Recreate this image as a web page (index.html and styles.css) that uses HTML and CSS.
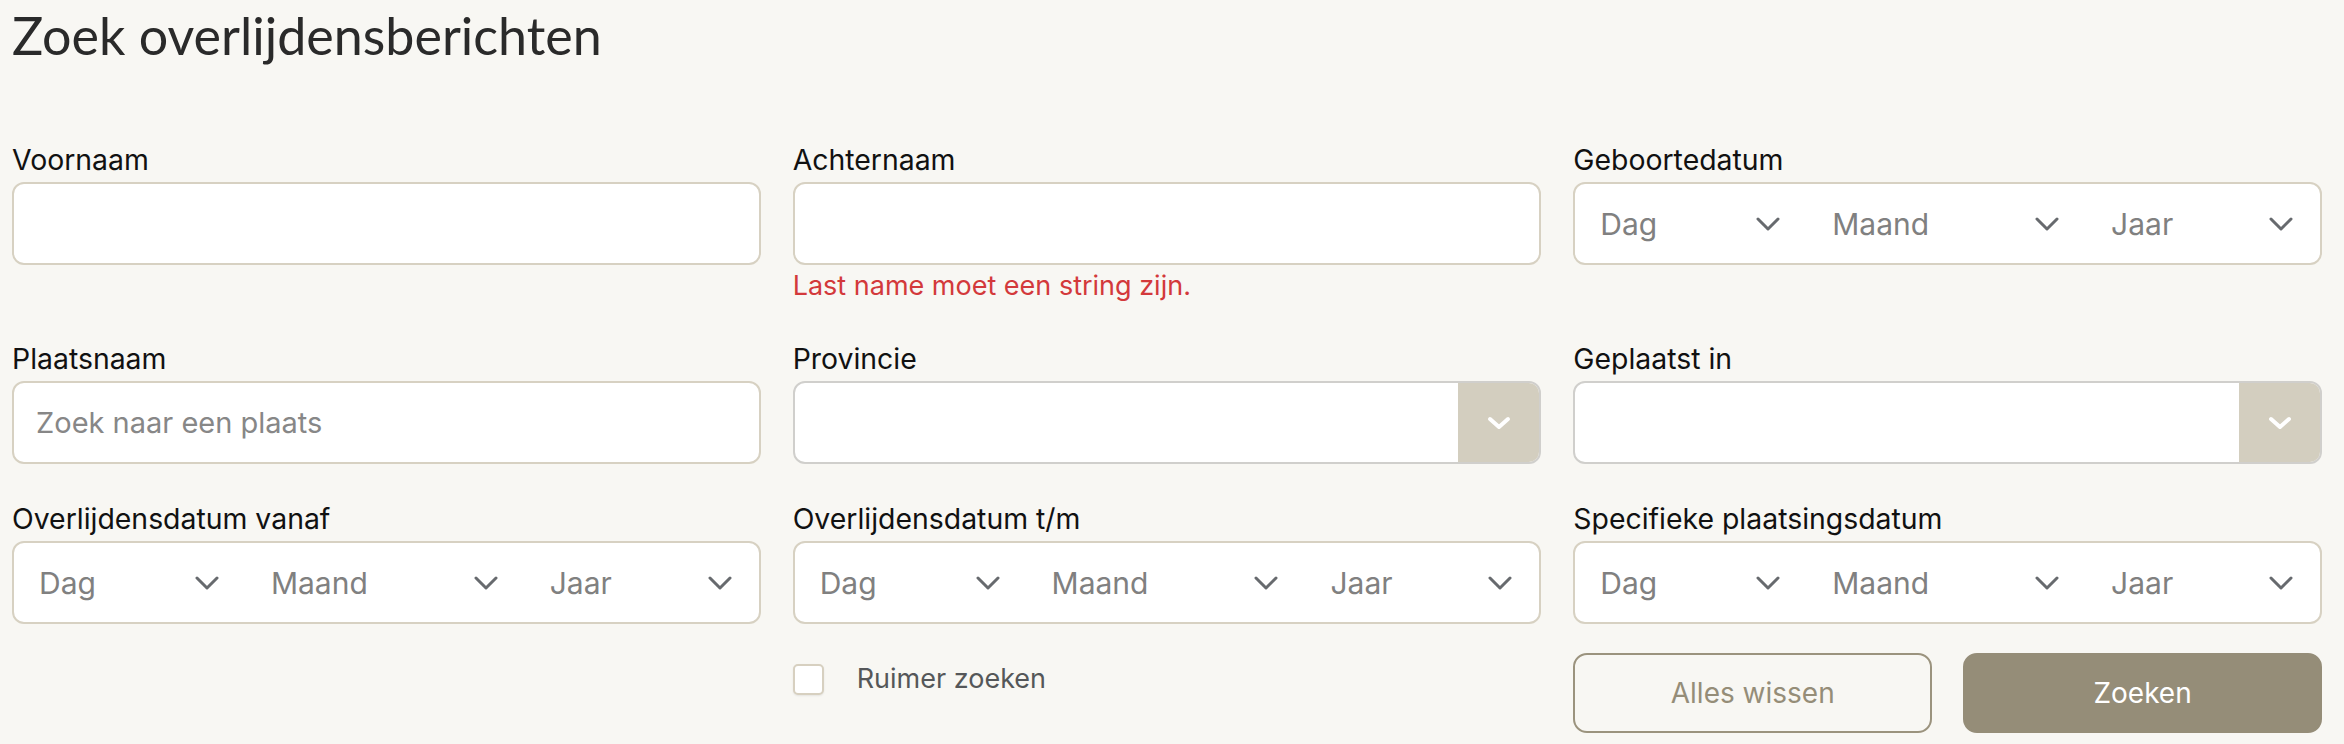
FILE: index.html
```html
<!DOCTYPE html>
<html lang="nl">
<head>
<meta charset="utf-8">
<title>Zoek overlijdensberichten</title>
<link rel="stylesheet" href="styles.css">
</head>
<body>
<main class="page">
  <h1 class="title">Zoek overlijdensberichten</h1>
  <form class="search-form">
    <div class="field">
      <label class="field-label">Voornaam</label>
      <input class="text-input" type="text">
    </div>
    <div class="field">
      <label class="field-label">Achternaam</label>
      <input class="text-input" type="text">
      <p class="field-error">Last name moet een string zijn.</p>
    </div>
    <div class="field">
      <label class="field-label">Geboortedatum</label>
      <div class="date-input">
        <div class="date-part"><span>Dag</span><svg class="chev" viewBox="0 0 24 14"><path d="M2 2 L12 12 L22 2"/></svg></div>
        <div class="date-part"><span>Maand</span><svg class="chev" viewBox="0 0 24 14"><path d="M2 2 L12 12 L22 2"/></svg></div>
        <div class="date-part"><span>Jaar</span><svg class="chev" viewBox="0 0 24 14"><path d="M2 2 L12 12 L22 2"/></svg></div>
      </div>
    </div>

    <div class="field">
      <label class="field-label">Plaatsnaam</label>
      <input class="text-input" type="text" placeholder="Zoek naar een plaats">
    </div>
    <div class="field">
      <label class="field-label">Provincie</label>
      <div class="combo">
        <div class="combo-value"></div>
        <div class="combo-button"><svg class="chev-white" viewBox="0 0 24 14"><path d="M3 3 L12 11 L21 3"/></svg></div>
      </div>
    </div>
    <div class="field">
      <label class="field-label">Geplaatst in</label>
      <div class="combo">
        <div class="combo-value"></div>
        <div class="combo-button"><svg class="chev-white" viewBox="0 0 24 14"><path d="M3 3 L12 11 L21 3"/></svg></div>
      </div>
    </div>

    <div class="field">
      <label class="field-label">Overlijdensdatum vanaf</label>
      <div class="date-input">
        <div class="date-part"><span>Dag</span><svg class="chev" viewBox="0 0 24 14"><path d="M2 2 L12 12 L22 2"/></svg></div>
        <div class="date-part"><span>Maand</span><svg class="chev" viewBox="0 0 24 14"><path d="M2 2 L12 12 L22 2"/></svg></div>
        <div class="date-part"><span>Jaar</span><svg class="chev" viewBox="0 0 24 14"><path d="M2 2 L12 12 L22 2"/></svg></div>
      </div>
    </div>
    <div class="field">
      <label class="field-label">Overlijdensdatum t/m</label>
      <div class="date-input">
        <div class="date-part"><span>Dag</span><svg class="chev" viewBox="0 0 24 14"><path d="M2 2 L12 12 L22 2"/></svg></div>
        <div class="date-part"><span>Maand</span><svg class="chev" viewBox="0 0 24 14"><path d="M2 2 L12 12 L22 2"/></svg></div>
        <div class="date-part"><span>Jaar</span><svg class="chev" viewBox="0 0 24 14"><path d="M2 2 L12 12 L22 2"/></svg></div>
      </div>
    </div>
    <div class="field">
      <label class="field-label">Specifieke plaatsingsdatum</label>
      <div class="date-input">
        <div class="date-part"><span>Dag</span><svg class="chev" viewBox="0 0 24 14"><path d="M2 2 L12 12 L22 2"/></svg></div>
        <div class="date-part"><span>Maand</span><svg class="chev" viewBox="0 0 24 14"><path d="M2 2 L12 12 L22 2"/></svg></div>
        <div class="date-part"><span>Jaar</span><svg class="chev" viewBox="0 0 24 14"><path d="M2 2 L12 12 L22 2"/></svg></div>
      </div>
    </div>
  </form>

  <div class="actions">
    <div class="actions-spacer"></div>
    <label class="check">
      <span class="check-box"></span>
      <span class="check-label">Ruimer zoeken</span>
    </label>
    <div class="buttons">
      <button class="btn btn-outline" type="button">Alles wissen</button>
      <button class="btn btn-primary" type="button">Zoeken</button>
    </div>
  </div>
</main>
</body>
</html>
```

FILE: styles.css
```css
* { box-sizing: border-box; }

html, body {
  margin: 0;
  background: #f8f7f3;
}

body {
  font-family: Inter, "Noto Sans", sans-serif;
  color: #111;
}

.page {
  width: 2322px;
  padding: 4px 0 0 12px;
}

.title {
  margin: 0 0 76px 0;
  font-family: Lato, "Open Sans", sans-serif;
  font-weight: 400;
  font-size: 52px;
  line-height: 62px;
  color: #2a2a2a;
}

.search-form {
  display: grid;
  grid-template-columns: repeat(3, 1fr);
  column-gap: 32px;
  row-gap: 37px;
}

.field {
  display: flex;
  flex-direction: column;
}

.field-label {
  font-size: 28.4px;
  line-height: 36px;
  margin-bottom: 4px;
  color: #111;
}

.text-input {
  height: 83px;
  border: 2px solid #d7d1c2;
  border-radius: 12px;
  background: #fff;
  padding: 0 22px;
  font-family: Inter, "Noto Sans", sans-serif;
  font-size: 29px;
  color: #222;
  outline: none;
  appearance: none;
}

.text-input::placeholder {
  color: #878787;
}

.field-error {
  margin: 3px 0 0 0;
  font-size: 27px;
  line-height: 36px;
  color: #d3393b;
}

.date-input {
  height: 83px;
  border: 2px solid #d7d1c2;
  border-radius: 12px;
  background: #fff;
  display: grid;
  grid-template-columns: 232fr 279fr 234fr;
}

.date-part {
  display: flex;
  align-items: center;
  justify-content: space-between;
  padding: 0 27px 0 25px;
  font-size: 30px;
  color: #808080;
}

.chev {
  width: 24px;
  height: 14px;
  fill: none;
  stroke: #676a6e;
  stroke-width: 3;
  stroke-linecap: round;
  stroke-linejoin: round;
}

.combo {
  height: 83px;
  border: 2px solid #d0cfcc;
  border-radius: 12px;
  background: #fff;
  display: flex;
  overflow: hidden;
}

.combo-value {
  flex: 1;
}

.combo-button {
  width: 81px;
  background: #d3cebf;
  display: flex;
  align-items: center;
  justify-content: center;
}

.chev-white {
  width: 24px;
  height: 14px;
  fill: none;
  stroke: #fff;
  stroke-width: 4;
  stroke-linecap: round;
  stroke-linejoin: round;
}

.actions {
  display: grid;
  grid-template-columns: repeat(3, 1fr);
  column-gap: 32px;
  margin-top: 29px;
}

.check {
  display: flex;
  align-items: center;
  gap: 33px;
  align-self: start;
  margin-top: 10px;
}

.check-box {
  width: 31px;
  height: 31px;
  border: 2px solid #d7d0c0;
  border-radius: 5px;
  background: #fff;
  box-shadow: 0 1px 2px rgba(0, 0, 0, 0.08);
}

.check-label {
  font-size: 27px;
  line-height: 32px;
  color: #555759;
}

.buttons {
  display: grid;
  grid-template-columns: 1fr 1fr;
  column-gap: 31px;
}

.btn {
  height: 80px;
  border-radius: 14px;
  font-family: Inter, "Noto Sans", sans-serif;
  font-size: 28px;
  cursor: pointer;
}

.btn-outline {
  background: transparent;
  border: 2px solid #9b937e;
  color: #958d78;
}

.btn-primary {
  background: #958d78;
  border: 2px solid #958d78;
  color: #fff;
}
```
